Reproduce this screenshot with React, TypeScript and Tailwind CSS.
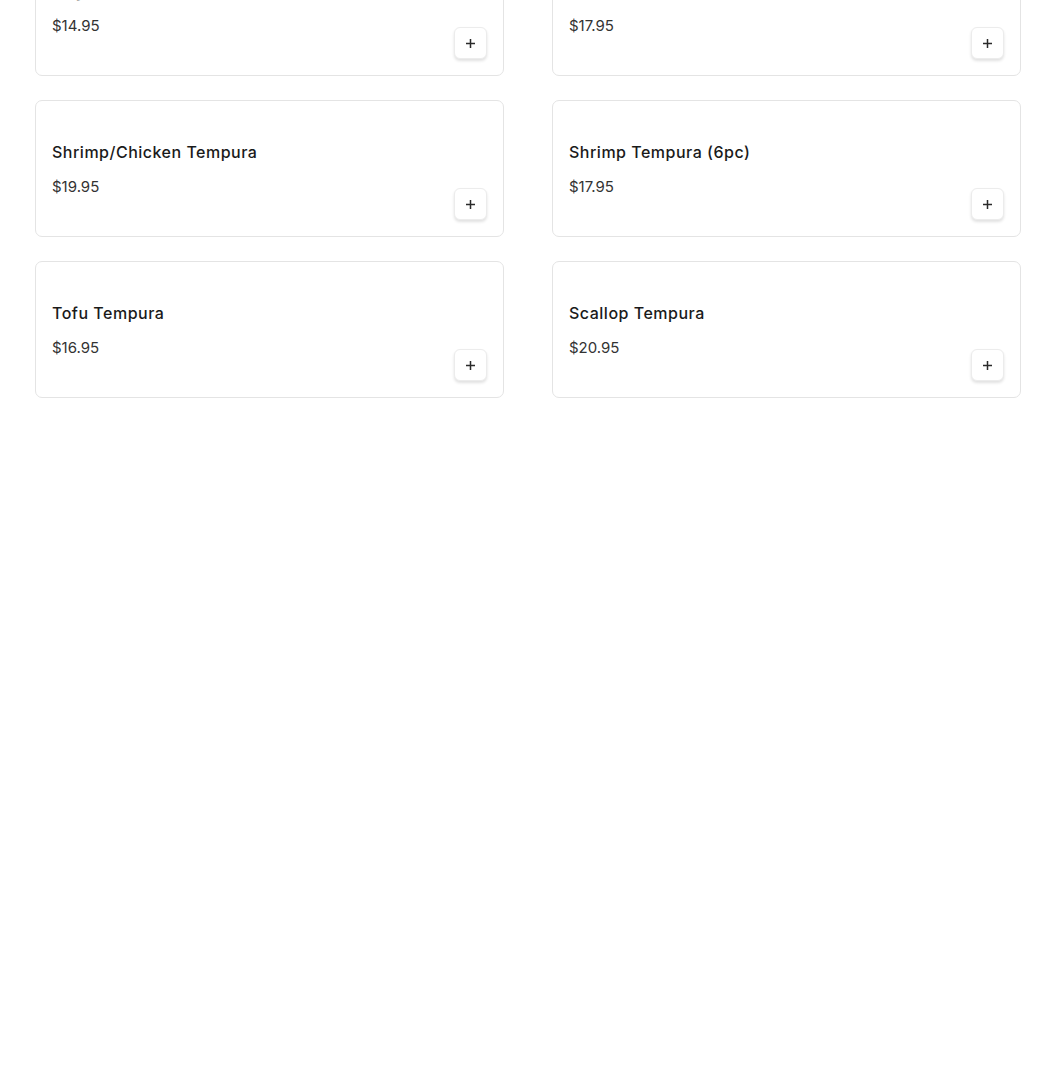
import React from "react";

const items = [
  { name: "Vegetable Tempura", price: "$14.95" },
  { name: "Chicken Tempura", price: "$17.95" },
  { name: "Shrimp/Chicken Tempura", price: "$19.95" },
  { name: "Shrimp Tempura (6pc)", price: "$17.95" },
  { name: "Tofu Tempura", price: "$16.95" },
  { name: "Scallop Tempura", price: "$20.95" },
];

function PlusIcon() {
  return (
    <svg width="11" height="11" viewBox="0 0 11 11" fill="none">
      <path d="M5.5 1v9M1 5.5h9" stroke="#2a2a2a" strokeWidth="1.5" />
    </svg>
  );
}

export default function App() {
  return (
    <div
      className="min-h-[1087px] bg-white overflow-hidden"
      style={{ fontFamily: "Inter, 'Open Sans', sans-serif" }}
    >
      <div className="ml-[35px] w-[986px] mt-[-61px] grid grid-cols-2 gap-x-[48px] gap-y-[24px]">
        {items.map((it) => (
          <div
            key={it.name}
            className="h-[137px] rounded-[7px] border border-[#e4e4e4] bg-white px-4 pt-[39px] pb-4 flex flex-col"
          >
            <div className="text-[16px] leading-[24px] font-medium text-[#1a1a1a] tracking-[0.5px]">
              {it.name}
            </div>
            <div className="mt-[11px] flex items-start justify-between">
              <div className="text-[15px] leading-[24px] text-[#333]">{it.price}</div>
              <button className="mt-[13px] w-[33px] h-[32px] rounded-[6px] border border-[#ececec] bg-white shadow-[0_2px_3px_rgba(0,0,0,0.12)] flex items-center justify-center">
                <PlusIcon />
              </button>
            </div>
          </div>
        ))}
      </div>
    </div>
  );
}
